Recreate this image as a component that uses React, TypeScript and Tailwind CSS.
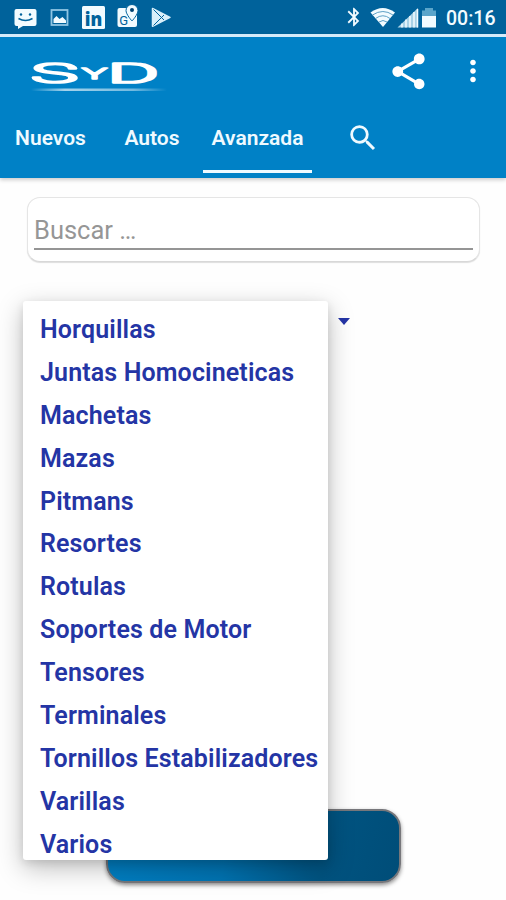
import { MdBluetooth, MdMoreVert, MdSearch, MdShare } from "react-icons/md";

const tabs = [
  { label: "Nuevos", className: "ml-[6px] w-[89px]" },
  { label: "Autos", className: "ml-[13px] w-[88px]" },
  { label: "Avanzada", className: "ml-[7px] w-[109px]" },
];

const items = [
  "Horquillas",
  "Juntas Homocineticas",
  "Machetas",
  "Mazas",
  "Pitmans",
  "Resortes",
  "Rotulas",
  "Soportes de Motor",
  "Tensores",
  "Terminales",
  "Tornillos Estabilizadores",
  "Varillas",
  "Varios",
];

function NotificationIcons() {
  return (
    <svg width="180" height="34" viewBox="0 0 180 34" fill="none" className="shrink-0">
      {/* messages */}
      <path d="M16.500 9h18q2 0 2 2v13q0 2-2 2H23l-5 3v-3h-1.500q-2 0-2-2V11q0-2 2-2z" fill="#f2fbff" />
      <path d="M18.500 18.500q7 4 14 0" stroke="#00629b" strokeWidth="1.500" />
      <circle cx="21" cy="14.500" r="1.200" fill="#00629b" />
      <circle cx="30" cy="14.500" r="1.200" fill="#00629b" />

      {/* gallery */}
      <rect x="51.500" y="10" width="16" height="15" stroke="#8fc5e3" strokeWidth="1.800" />
      <path d="M53.500 23v-4l3-3 3 3 3-2 3.500 3.500V23z" fill="#f2fbff" />

      {/* linkedin */}
      <rect x="82" y="6" width="23" height="23" rx="1.500" fill="#f2fbff" />
      <text x="84.800" y="25.500" fontFamily="Open Sans, sans-serif" fontWeight="800" fontSize="20" fill="#00629b" textLength="17.500" lengthAdjust="spacingAndGlyphs">in</text>

      {/* maps */}
      <rect x="117.500" y="8" width="19.500" height="19" rx="2" fill="#f2fbff" />
      <text x="119.300" y="25" fontFamily="Roboto, sans-serif" fontSize="13" fill="#00629b">G</text>
      <path d="M132 4.500a6 6 0 0 1 6 6c0 4-6 10.500-6 10.500s-6-6.500-6-10.500a6 6 0 0 1 6-6z" fill="#f2fbff" stroke="#00629b" strokeWidth="1" />
      <circle cx="132" cy="10" r="2" fill="#00416f" />

      {/* play store */}
      <path d="M152.500 8.500v17.800L170 17.400z" fill="#d9effa" stroke="#d9effa" strokeWidth="1.500" strokeLinejoin="round" />
      <path d="M153.500 9.500l10.500 10.500M153.500 25.500L164 15" stroke="#00629b" strokeWidth="1" />
    </svg>
  );
}

function SystemIcons() {
  return (
    <svg width="70" height="34" viewBox="370 0 70 34" className="shrink-0">
      {/* wifi */}
      <path d="M370.500 12.500Q382.800 3.500 395 12.500L383 27z" fill="#f2fbff" />
      <path d="M372.500 15Q383 8 393 15M375.500 18.500Q383 13 390 18.500M379 22Q383 19 387 22" fill="none" stroke="#5da0c5" strokeWidth="1" />

      {/* signal */}
      <path d="M397.500 27.500L418 8v19.500z" fill="#a9d2e6" />
      <path d="M402 27.500v-4M406 27.500v-8M410 27.500V16M414 27.500V12M417.500 27.500V9" stroke="#f2fbff" strokeWidth="1.500" />

      {/* battery */}
      <path d="M425 8h8v2.500h3V17h-14v-6.500h3z" fill="#5ba5ca" />
      <path d="M422 16h14v11.500h-14z" fill="#f2fbff" />
    </svg>
  );
}

function Logo() {
  return (
    <svg width="140" height="38" viewBox="30 56 140 38" className="ml-[30px] mt-[8px] shrink-0">
      <defs>
        <linearGradient id="glow">
          <stop offset="0" stopColor="#fff" stopOpacity="0" />
          <stop offset=".25" stopColor="#fff" stopOpacity=".65" />
          <stop offset=".75" stopColor="#fff" stopOpacity=".45" />
          <stop offset="1" stopColor="#fff" stopOpacity="0" />
        </linearGradient>
      </defs>
      <g fill="#fff" stroke="#fff" fontFamily="Roboto, sans-serif" fontWeight="300" strokeLinejoin="round">
        <text transform="translate(30.500 82.800) scale(2.850 1)" fontSize="28.500" strokeWidth="3.600" vectorEffect="non-scaling-stroke">S</text>
        <text transform="translate(82 78.500) scale(2.700 1)" fontSize="15.500" strokeWidth="3" vectorEffect="non-scaling-stroke">Y</text>
        <text transform="translate(107 82.800) scale(2.800 1)" fontSize="28.500" strokeWidth="3.600" vectorEffect="non-scaling-stroke">D</text>
      </g>
      <rect x="31" y="88.500" width="136" height="2.500" fill="url(#glow)" />
    </svg>
  );
}

export default function App() {
  return (
    <div className="relative h-[900px] w-[506px] overflow-hidden bg-[#fefefe] font-[Roboto,sans-serif]">
      <div className="flex h-[34px] items-center bg-[#00629b] text-[#f2fbff]">
        <NotificationIcons />
        <MdBluetooth className="ml-[163px] mr-[5px] size-[22px] shrink-0" />
        <SystemIcons />
        <span className="ml-[6px] mt-[3px] text-[19.500px] leading-none font-medium">00:16</span>
      </div>

      <header className="flex h-[144px] flex-col border-t-[3px] border-[#d5ebfa] bg-[#0081c6] text-white shadow-[0_2px_4px_rgba(0,0,0,0.2)]">
        <div className="flex h-[68px] items-center">
          <Logo />
          <MdShare className="ml-[217px] size-[43px] shrink-0" />
          <MdMoreVert className="ml-[26px] size-[34px] shrink-0" />
        </div>
        <nav className="flex h-[68px] text-[21px] font-semibold text-[#effaff]">
          {tabs.map((tab) => (
            <div key={tab.label} className={`flex h-full items-center justify-center ${tab.className} ${tab.label === "Avanzada" ? "border-b-[3px] border-[#effaff] pt-[3px]" : ""}`}>
              {tab.label}
            </div>
          ))}
          <MdSearch className="ml-[34px] mt-[16px] size-[34px]" />
        </nav>
      </header>

      <main>
        <div className="ml-[27px] mt-[19px] h-[65px] w-[453px] rounded-[13px] border border-[#e5e5e5] border-b-[#d8d8d8] bg-white px-[6px] pt-[16px] shadow-[0_1px_1px_#dedede]">
          <div className="h-[36px] border-b-2 border-[#959595] text-[25.500px] leading-[33px] text-[#969696]">Buscar …</div>
        </div>

        <div className="ml-[338px] mt-[56px] h-0 w-0 border-x-[6.500px] border-t-[7px] border-x-transparent border-t-[#2434a6]" />

        <button className="ml-[106px] mt-[484px] block h-[74px] w-[295px] rounded-[19px] border-2 border-[#77777b] bg-[linear-gradient(105deg,#0081c6_0%,#0074b3_42%,#005380_75%,#004d78_100%)] shadow-[0_2px_4px_rgba(0,0,0,0.45)]" />
      </main>

      {/* spinner popup */}
      <ul className="absolute left-[23px] top-[301px] h-[559px] w-[305px] overflow-hidden rounded-[3px] bg-white pt-[8px] shadow-[0_8px_26px_rgba(0,0,0,0.26),0_3px_8px_rgba(0,0,0,0.1)]">
        {items.map((item) => (
          <li key={item} className="h-[42.900px] pl-[17px] text-[25px] leading-[42.900px] font-semibold tracking-[0.13px] whitespace-nowrap text-[#2435a5]">
            {item}
          </li>
        ))}
      </ul>
    </div>
  );
}
